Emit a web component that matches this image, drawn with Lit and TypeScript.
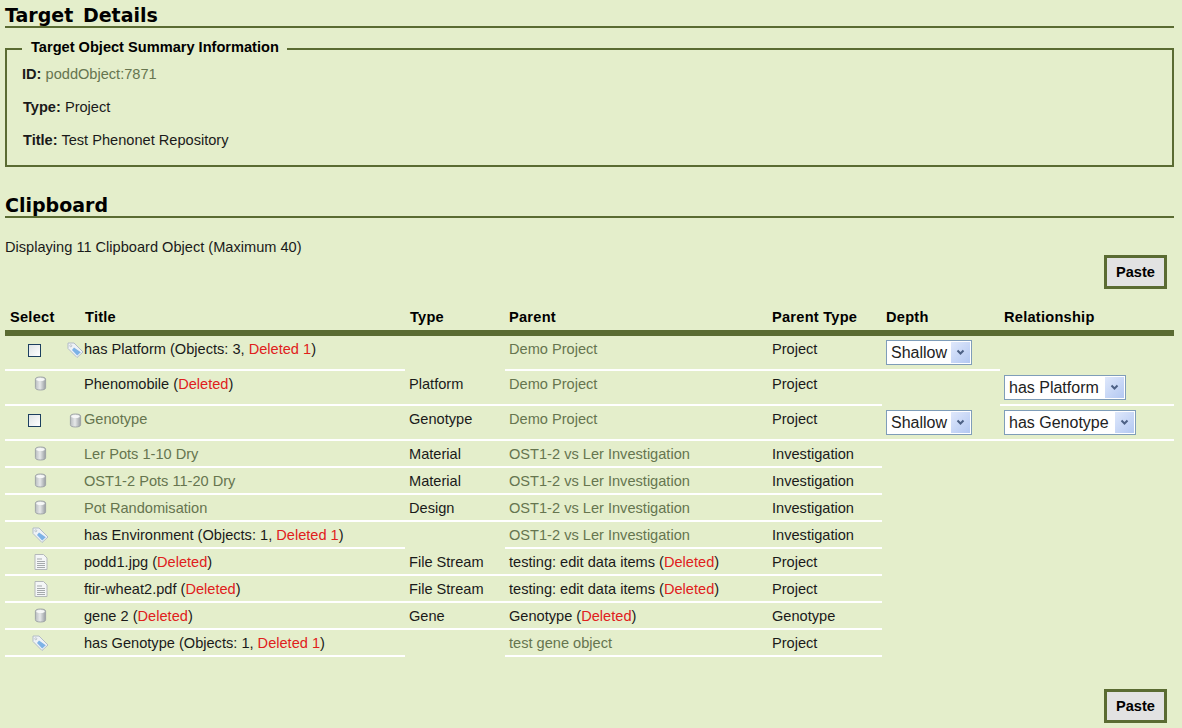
import { LitElement, html, css, nothing } from "lit";
import { customElement } from "lit/decorators.js";

type Icon = "tag" | "can" | "doc";

interface Row {
  check?: boolean;
  icon: Icon;
  title: string;
  link?: boolean;
  note?: string;
  type: string;
  parent: string;
  parentLink?: boolean;
  parentDeleted?: boolean;
  parentType: string;
  depth?: string;
  rel?: string;
}

const rows: Row[] = [
  { check: true, icon: "tag", title: "has Platform", note: "Objects: 3, ", type: "", parent: "Demo Project", parentLink: true, parentType: "Project", depth: "Shallow" },
  { icon: "can", title: "Phenomobile", note: "", type: "Platform", parent: "Demo Project", parentLink: true, parentType: "Project", rel: "has Platform" },
  { check: true, icon: "can", title: "Genotype", link: true, type: "Genotype", parent: "Demo Project", parentLink: true, parentType: "Project", depth: "Shallow", rel: "has Genotype" },
  { icon: "can", title: "Ler Pots 1-10 Dry", link: true, type: "Material", parent: "OST1-2 vs Ler Investigation", parentLink: true, parentType: "Investigation" },
  { icon: "can", title: "OST1-2 Pots 11-20 Dry", link: true, type: "Material", parent: "OST1-2 vs Ler Investigation", parentLink: true, parentType: "Investigation" },
  { icon: "can", title: "Pot Randomisation", link: true, type: "Design", parent: "OST1-2 vs Ler Investigation", parentLink: true, parentType: "Investigation" },
  { icon: "tag", title: "has Environment", note: "Objects: 1, ", type: "", parent: "OST1-2 vs Ler Investigation", parentLink: true, parentType: "Investigation" },
  { icon: "doc", title: "podd1.jpg", note: "", type: "File Stream", parent: "testing: edit data items", parentDeleted: true, parentType: "Project" },
  { icon: "doc", title: "ftir-wheat2.pdf", note: "", type: "File Stream", parent: "testing: edit data items", parentDeleted: true, parentType: "Project" },
  { icon: "can", title: "gene 2", note: "", type: "Gene", parent: "Genotype", parentDeleted: true, parentType: "Genotype" },
  { icon: "tag", title: "has Genotype", note: "Objects: 1, ", type: "", parent: "test gene object", parentLink: true, parentType: "Project" },
];

const icons = {
  tag: html`<svg class="tag" width="17" height="16" viewBox="0 0 17 16">
    <path d="M1 1 H7 L16 10 L10 15.5 L1 6.5 Z" fill="#eef2f6" stroke="#b2bcc6"/>
    <path d="M7 5.5 L13.8 10.2 L10.2 13.5 L5 8 Z" fill="#7db2e6"/>
    <circle cx="3.8" cy="3.8" r="1" fill="#fff" stroke="#9aa6b2" stroke-width=".6"/>
  </svg>`,
  can: html`<svg class="can" width="13" height="15" viewBox="0 0 14 16">
    <defs><linearGradient id="c" x1="0" x2="1" y1="0" y2="0">
      <stop offset="0" stop-color="#b9bdc0"/><stop offset=".45" stop-color="#e6e8e9"/><stop offset="1" stop-color="#989da1"/>
    </linearGradient></defs>
    <path d="M1.5 3.5 Q1.5 1 7 1 Q12.5 1 12.5 3.5 V12.5 Q12.5 15 7 15 Q1.5 15 1.5 12.5 Z" fill="url(#c)" stroke="#9da2a5"/>
    <ellipse cx="7" cy="3.6" rx="4.6" ry="1.6" fill="#f6f7f7"/>
  </svg>`,
  doc: html`<svg class="doc" width="14" height="16" viewBox="0 0 14 16">
    <path d="M1 .5 H9.5 L13 4 V15.5 H1 Z" fill="#f4f6f7" stroke="#b4b8ba"/>
    <path d="M3 5 H8 M3 7.5 H11 M3 9.5 H11 M3 11.5 H11 M3 13.5 H11" stroke="#a5a9ac"/>
  </svg>`,
};

@customElement("app-root")
export class AppRoot extends LitElement {
  static styles = css`
    :host {
      display: block;
      box-sizing: border-box;
      height: 728px;
      padding: 0 8px 0 5px;
      background: #e4eecb;
      color: #1a1a1a;
      font-family: "Liberation Sans", Arial, sans-serif;
      font-size: 14.6px;
      line-height: 16px;
    }

    h2 {
      margin: 0;
      height: 26px;
      border-bottom: 2px solid #5a6b32;
      font-family: "DejaVu Sans", Verdana, sans-serif;
      font-size: 19px;
      line-height: 30px;
      font-weight: bold;
      word-spacing: 3px;
      color: #000;
    }

    fieldset {
      margin: 11px 0 0;
      padding: 0 16px;
      height: 128px;
      box-sizing: border-box;
      border: 2px solid #5a6b32;
      min-width: 0;
    }

    legend {
      margin-left: -1px;
      padding: 0 8px 4px 9px;
      font-weight: bold;
      color: #000;
    }

    fieldset p {
      margin: 0;
      height: 33px;
    }

    fieldset p:first-of-type {
      margin-left: -1px;
      margin-top: 7px;
    }

    .clip {
      margin-top: 23px;
    }

    .count {
      margin: 21px 0 0;
    }

    a {
      color: #66754f;
      text-decoration: none;
    }

    .del {
      color: #e0201c;
    }

    .actions {
      display: flex;
      justify-content: flex-end;
      padding-right: 7px;
    }

    .bottom {
      margin-top: 32px;
    }

    button {
      width: 63px;
      height: 34px;
      box-sizing: border-box;
      padding: 0;
      border: 3px solid #5a6b32;
      background: #e2e2e2;
      color: #000;
      font: bold 14.6px "Liberation Sans", Arial, sans-serif;
    }

    table {
      width: 1169px;
      margin-top: 20px;
      table-layout: fixed;
      border-collapse: separate;
      border-spacing: 0;
      empty-cells: hide;
    }

    th {
      padding: 0 0 5px 4px;
      height: 16px;
      border-bottom: 6px solid #5a6b32;
      text-align: left;
      font-weight: bold;
      color: #000;
      letter-spacing: 0.25px;
    }

    th.wide {
      padding-left: 5px;
    }

    th.title {
      padding-left: 21px;
    }

    td {
      padding: 5px 0 4px 4px;
      height: 16px;
      border-bottom: 2px solid #fff;
      vertical-align: top;
    }

    td.sel {
      padding: 5px 0 4px 0;
      text-align: center;
    }

    td.sel svg {
      display: block;
      margin: 0 auto;
      position: relative;
      left: 6px;
    }

    td.ttl {
      padding-left: 3px;
    }

    td.ttl > div {
      display: flex;
    }

    .slot {
      flex: none;
      width: 17px;
    }

    .slot svg {
      display: block;
      margin-top: 1px;
    }

    .slot .can {
      margin: 2px 0 0 2px;
    }

    td.pick {
      padding: 4px 0 4px 4px;
    }

    input {
      appearance: none;
      display: block;
      width: 13px;
      height: 13px;
      box-sizing: border-box;
      margin: 3px auto 0;
      border: 1px solid #1c3f5f;
      background: linear-gradient(135deg, #dfe4e6, #fff);
    }

    .combo {
      position: relative;
      display: inline-block;
      height: 25px;
    }

    select {
      appearance: none;
      display: block;
      height: 25px;
      box-sizing: border-box;
      padding: 0 26px 0 4px;
      border: 1px solid #7f9db9;
      border-radius: 0;
      background: #fff;
      color: #222;
      font: 16px "Liberation Sans", Arial, sans-serif;
    }

    select.short {
      padding-right: 23px;
    }

    .arrow {
      position: absolute;
      top: 2px;
      right: 2px;
      width: 19px;
      height: 21px;
      display: flex;
      align-items: center;
      justify-content: center;
      background: linear-gradient(135deg, #dfe8fb, #b3c8f2);
      pointer-events: none;
    }
  `;

  combo(label: string) {
    return html`<span class="combo">
      <select class=${label === "Shallow" ? "short" : ""}><option>${label}</option></select>
      <span class="arrow">
        <svg width="9" height="7" viewBox="0 0 9 7"><path d="M1.5 1.5 L4.5 4.5 L7.5 1.5" fill="none" stroke="#4d6185" stroke-width="2"/></svg>
      </span>
    </span>`;
  }

  renderRow(r: Row) {
    const deleted = r.note === undefined
      ? nothing
      : r.note
        ? html` (${r.note}<span class="del">Deleted 1</span>)`
        : html` (<span class="del">Deleted</span>)`;
    return html`<tr>
      <td class="sel">${r.check ? html`<input type="checkbox" />` : icons[r.icon]}</td>
      <td class="ttl"><div>
        <span class="slot">${r.check ? icons[r.icon] : nothing}</span>
        <span>${r.link ? html`<a>${r.title}</a>` : r.title}${deleted}</span>
      </div></td>
      <td>${r.type}</td>
      <td>${r.parentLink ? html`<a>${r.parent}</a>` : r.parent}${r.parentDeleted
        ? html` (<span class="del">Deleted</span>)`
        : nothing}</td>
      <td>${r.parentType}</td>
      <td class="pick">${r.depth ? this.combo(r.depth) : nothing}</td>
      <td class="pick">${r.rel ? this.combo(r.rel) : nothing}</td>
    </tr>`;
  }

  render() {
    return html`
      <h2>Target Details</h2>
      <fieldset>
        <legend>Target Object Summary Information</legend>
        <p><b>ID:</b> <a>poddObject:7871</a></p>
        <p><b>Type:</b> Project</p>
        <p><b>Title:</b> Test Phenonet Repository</p>
      </fieldset>

      <h2 class="clip">Clipboard</h2>
      <p class="count">Displaying 11 Clipboard Object (Maximum 40)</p>
      <div class="actions"><button>Paste</button></div>

      <table>
        <colgroup>
          <col style="width:59px" /><col style="width:341px" /><col style="width:100px" />
          <col style="width:263px" /><col style="width:114px" /><col style="width:118px" /><col />
        </colgroup>
        <thead>
          <tr>
            <th class="wide">Select</th><th class="title">Title</th><th class="wide">Type</th><th>Parent</th>
            <th>Parent Type</th><th>Depth</th><th>Relationship</th>
          </tr>
        </thead>
        <tbody>${rows.map((r) => this.renderRow(r))}</tbody>
      </table>

      <div class="actions bottom"><button>Paste</button></div>
    `;
  }
}
